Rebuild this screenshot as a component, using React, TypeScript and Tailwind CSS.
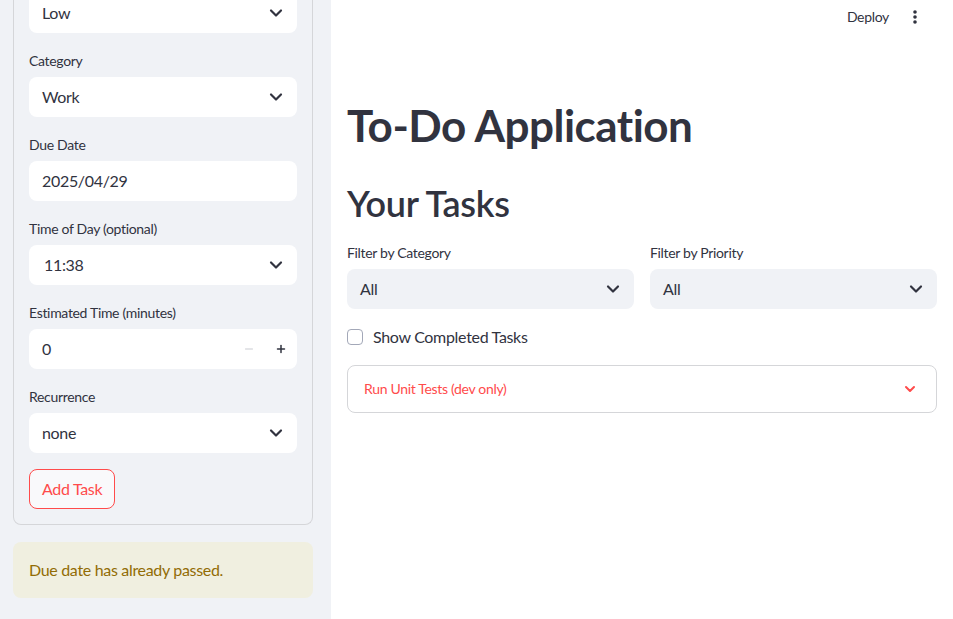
import { ChevronDown, Minus, Plus } from 'lucide-react'

const font = { fontFamily: '"Source Sans Pro", Lato, "Liberation Sans", sans-serif' }

function Label({ text }: { text: string }) {
  return <div className="h-6 mb-1 flex items-center text-sm text-[#31333f]">{text}</div>
}

function Select({ value, bg = 'bg-white' }: { value: string; bg?: string }) {
  return (
    <div className={`h-10 rounded-lg ${bg} flex items-center justify-between pl-[13px] pr-[11px] text-base text-[#31333f]`}>
      <span>{value}</span>
      <ChevronDown className="w-5 h-5 text-[#31333f]" strokeWidth={2.6} />
    </div>
  )
}

function Field({ label, children }: { label: string; children: React.ReactNode }) {
  return (
    <div>
      <Label text={label} />
      {children}
    </div>
  )
}

export default function App() {
  return (
    <div className="w-[953px] h-[619px] flex overflow-hidden text-[#31333f] tracking-[-0.02em]" style={font}>
      {/* sidebar */}
      <div className="w-[331px] shrink-0 bg-[#f0f2f6] pl-[13px] pr-[18px]">
        <div className="-mt-[7px] border border-t-0 border-[#d5d6d9] rounded-b-lg px-[15px] pb-[15px] flex flex-col gap-4">
          <Select value="Low" />
          <Field label="Category">
            <Select value="Work" />
          </Field>
          <Field label="Due Date">
            <div className="h-10 rounded-lg bg-white flex items-center px-[13px] text-base">2025/04/29</div>
          </Field>
          <Field label="Time of Day (optional)">
            <div className="h-10 rounded-lg bg-white flex items-center justify-between pl-[15px] pr-[11px] text-base">
              <span>11:38</span>
              <ChevronDown className="w-5 h-5" strokeWidth={2.6} />
            </div>
          </Field>
          <Field label="Estimated Time (minutes)">
            <div className="h-10 rounded-lg bg-white flex items-center text-base">
              <span className="flex-1 pl-[13px]">0</span>
              <div className="w-8 h-10 flex items-center justify-center text-[#c9cbd1]">
                <Minus className="w-3 h-3" strokeWidth={2} />
              </div>
              <div className="w-8 h-10 flex items-center justify-center text-[#31333f]">
                <Plus className="w-3 h-3" strokeWidth={3} />
              </div>
            </div>
          </Field>
          <Field label="Recurrence">
            <Select value="none" />
          </Field>
          <div>
            <button className="h-10 px-3 rounded-lg border border-[#ff4b4b] bg-[#f9f9fb] text-[#ff4b4b] text-base">
              Add Task
            </button>
          </div>
        </div>
        <div className="mt-[17px] h-[56px] rounded-lg bg-[#f0efe0] flex items-center px-4 text-base text-[#926c05]">
          Due date has already passed.
        </div>
      </div>

      {/* main */}
      <div className="flex-1 bg-white relative">
        <div className="absolute top-[7px] right-[36px] flex items-center gap-[24px] text-sm text-[#31333f]">
          <span>Deploy</span>
          <svg width="4" height="16" viewBox="0 0 4 16" className="fill-[#31333f]">
            <circle cx="2" cy="3" r="1.8" />
            <circle cx="2" cy="8" r="1.8" />
            <circle cx="2" cy="13" r="1.8" />
          </svg>
        </div>
        <div className="pl-4 pr-4 pt-[95px]">
          <h1 className="text-[44px] leading-[60px] font-bold text-[#31333f] tracking-[-0.5px]">To-Do Application</h1>
          <h2 className="mt-[24px] text-[36px] leading-[48px] font-semibold text-[#31333f]">Your Tasks</h2>
          <div className="mt-[14px] grid grid-cols-2 gap-4">
            <Field label="Filter by Category">
              <Select value="All" bg="bg-[#f0f2f6]" />
            </Field>
            <Field label="Filter by Priority">
              <Select value="All" bg="bg-[#f0f2f6]" />
            </Field>
          </div>
          <div className="mt-[16px] flex items-center gap-[10px] text-base">
            <div className="w-4 h-4 rounded border border-[#a3a8b8] bg-white" />
            <span>Show Completed Tasks</span>
          </div>
          <div className="mt-[16px] h-12 rounded-lg border border-[#d5d6d9] flex items-center justify-between pl-4 pr-[18px] text-sm text-[#ff4b4b]">
            <span>Run Unit Tests (dev only)</span>
            <ChevronDown className="w-4 h-4" strokeWidth={3} />
          </div>
        </div>
      </div>
    </div>
  )
}
